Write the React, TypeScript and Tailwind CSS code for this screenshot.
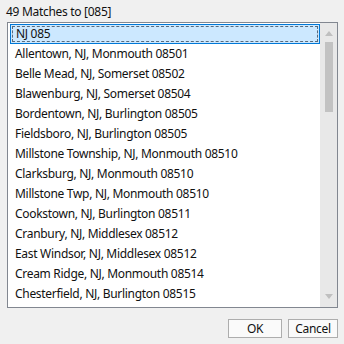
const rows = [
  'NJ 085',
  'Allentown, NJ, Monmouth 08501',
  'Belle Mead, NJ, Somerset 08502',
  'Blawenburg, NJ, Somerset 08504',
  'Bordentown, NJ, Burlington 08505',
  'Fieldsboro, NJ, Burlington 08505',
  'Millstone Township, NJ, Monmouth 08510',
  'Clarksburg, NJ, Monmouth 08510',
  'Millstone Twp, NJ, Monmouth 08510',
  'Cookstown, NJ, Burlington 08511',
  'Cranbury, NJ, Middlesex 08512',
  'East Windsor, NJ, Middlesex 08512',
  'Cream Ridge, NJ, Monmouth 08514',
  'Chesterfield, NJ, Burlington 08515',
];

export default function App() {
  return (
    <div
      className="w-[344px] h-[344px] bg-[#f0f0f0] text-[12px] tracking-[-0.3px] text-[#111] overflow-hidden"
      style={{ fontFamily: '"Noto Sans", "Open Sans", sans-serif' }}
    >
      <div className="pl-[6px] pt-[4px] h-[22px] leading-[16px]">49 Matches to [085]</div>

      {/* list box */}
      <div className="ml-[7px] w-[331px] h-[286px] border border-[#828790] bg-white flex">
        <div className="flex-1 pt-[1px] pl-[2px]">
          {rows.map((r, i) =>
            i === 0 ? (
              <div key={r} className="h-[20px] border border-[#0078d7] bg-[#cce8ff] p-[1px]">
                <div className="h-full border border-dashed border-[#5a6b7c] pl-[3px] leading-[14px]">{r}</div>
              </div>
            ) : (
              <div key={r} className="h-[20px] pl-[5px] leading-[20px] whitespace-nowrap">
                {r}
              </div>
            )
          )}
        </div>

        {/* scrollbar */}
        <div className="w-[17px] bg-[#e8e8e8] flex flex-col items-center">
          <div className="h-[19px] flex items-center justify-center pt-[2px]">
            <svg width="8" height="5" viewBox="0 0 8 5"><path d="M0 5 L4 0 L8 5 Z" fill="#bfbfbf" /></svg>
          </div>
          <div className="w-[8px] h-[70px] bg-[#c2c2c2]" />
          <div className="flex-1" />
          <div className="h-[19px] flex items-center justify-center pb-[2px]">
            <svg width="8" height="5" viewBox="0 0 8 5"><path d="M0 0 L4 5 L8 0 Z" fill="#bfbfbf" /></svg>
          </div>
        </div>
      </div>

      <div className="flex justify-end gap-[6px] pr-[6px] pt-[11px]">
        <button className="w-[54px] h-[19px] border border-[#adadad] bg-[#fafafa] leading-[16px]">OK</button>
        <button className="w-[50px] h-[19px] border border-[#adadad] bg-[#fafafa] leading-[16px]">Cancel</button>
      </div>
    </div>
  );
}
